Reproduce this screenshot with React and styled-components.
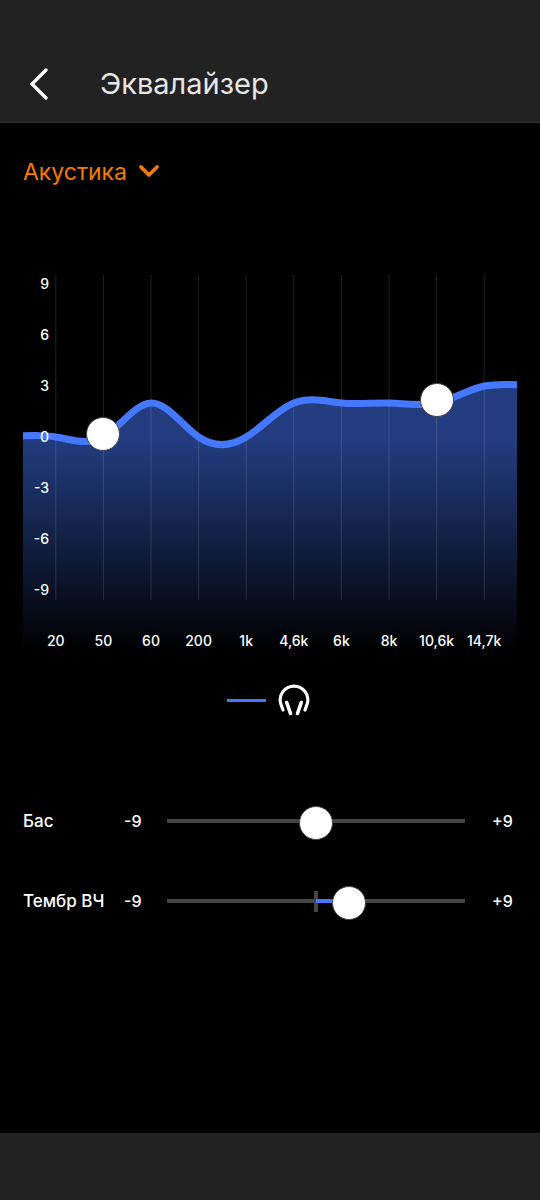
import React, { useState } from 'react';
import styled, { createGlobalStyle } from 'styled-components';

const GlobalStyle = createGlobalStyle`
  * {
    box-sizing: border-box;
  }
  body {
    margin: 0;
    background-color: #000;
    color: #fff;
    font-family: Inter, 'Open Sans', sans-serif;
  }
`;

const Page = styled.div`
  display: flex;
  flex-direction: column;
  min-height: 100vh;
`;

const Header = styled.header`
  display: flex;
  align-items: center;
  gap: 50px;
  padding: 46px 30px 0;
  height: 123px;
  background-color: #222;
  border-bottom: 1px solid #333;
`;

const BackButton = styled.button`
  display: flex;
  padding: 0;
  background-color: transparent;
  border: none;
  color: #fff;
  cursor: pointer;
`;

const Title = styled.h1`
  margin: 0;
  font-size: 29px;
  line-height: 36px;
  font-weight: 400;
  color: #e6e6e6;
`;

const Main = styled.main`
  flex: 1;
  padding: 33px 23px 0;
`;

const Preset = styled.div`
  display: flex;
  align-items: center;
  gap: 12px;
  height: 32px;
  color: #f57c00;
`;

const PresetSelect = styled.select`
  appearance: none;
  field-sizing: content;
  padding: 0;
  background-color: transparent;
  border: none;
  color: inherit;
  font-family: inherit;
  font-size: 23px;
  line-height: 32px;
  cursor: pointer;
`;

const ChartBox = styled.section`
  display: grid;
  height: 392px;
  margin-top: 70px;
  > * {
    grid-area: 1 / 1;
  }
`;

const Plot = styled.svg`
  width: 100%;
  height: 392px;
`;

const GainScale = styled.div`
  width: 26px;
  font-size: 14px;
  line-height: 51px;
  font-weight: 500;
  text-align: right;
`;

const BandGrid = styled.div`
  display: grid;
  grid-template-columns: repeat(10, minmax(0, 1fr));
  padding: 0 9px;
`;

const BandNames = styled(BandGrid)`
  align-self: end;
  justify-items: center;
  font-size: 14px;
  line-height: 18px;
  font-weight: 500;
  white-space: nowrap;
`;

const Handles = styled(BandGrid)`
  align-items: start;
  justify-items: center;
  padding-top: 7px;
`;

const BandSlider = styled.input`
  appearance: none;
  grid-row: 1;
  grid-column: ${(props) => props.$column};
  writing-mode: vertical-lr;
  direction: rtl;
  width: 34px;
  height: 338px;
  margin: 0;
  background: transparent;
  &::-webkit-slider-thumb {
    appearance: none;
    width: 34px;
    height: 34px;
    background-color: #fff;
    border: 1px solid #444;
    border-radius: 50%;
  }
`;

const Legend = styled.div`
  display: flex;
  align-items: center;
  justify-content: center;
  gap: 12px;
  margin: 34px 0 65px;
  padding-right: 4px;
`;

const LegendLine = styled.span`
  width: 39px;
  height: 3px;
  background-color: #4479ff;
`;

const ToneRow = styled.div`
  display: grid;
  grid-template-columns: 101px 43px 1fr 52px;
  align-items: center;
  height: 80px;
  font-size: 16px;
  line-height: 20px;
  font-weight: 500;
`;

const ToneLabel = styled.label`
  font-size: 17px;
`;

const MaxLabel = styled.span`
  padding-left: 27px;
`;

const ToneSlider = styled.input`
  appearance: none;
  width: calc(100% + 34px);
  height: 34px;
  margin: 0 -17px;
  background: linear-gradient(#444, #444) no-repeat center / 4px 21px;
  &::-webkit-slider-runnable-track {
    height: 34px;
    background:
      linear-gradient(
          to right,
          #444 ${(props) => props.$from}%,
          #4479ff ${(props) => props.$from}% ${(props) => props.$to}%,
          #444 ${(props) => props.$to}%
        )
        no-repeat center / calc(100% - 34px) 4px;
  }
  &::-webkit-slider-thumb {
    appearance: none;
    width: 34px;
    height: 34px;
    margin-top: 2px;
    background-color: #fff;
    border: 1px solid #444;
    border-radius: 50%;
  }
`;

const Footer = styled.footer`
  height: 67px;
  background-color: #222;
`;

const gains = ['9', '6', '3', '0', '-3', '-6', '-9'];

// slope is the rise of the curve at the band, in dB per column
const bands = [
  { name: '20', gain: 0, slope: -0.4 },
  { name: '50', gain: 0, slope: 1.6, handle: true },
  { name: '60', gain: 2, slope: 0.1 },
  { name: '200', gain: 0, slope: -1.9 },
  { name: '1k', gain: 0, slope: 1.7 },
  { name: '4,6k', gain: 2, slope: 1.1 },
  { name: '6k', gain: 2, slope: -0.3 },
  { name: '8k', gain: 2, slope: -0.1 },
  { name: '10,6k', gain: 2, slope: 0.6, handle: true },
  { name: '14,7k', gain: 3, slope: 0.6 },
];

const COLUMN = 47.6;
const DB = 17;
const bandX = (index) => 9 + COLUMN * (index + 0.5);
const gainY = (gain) => 179 - gain * DB;

function getCurve() {
  let d = `M-4 178C12 177 22 177 ${bandX(0)} ${gainY(0)}`;
  for (let i = 1; i < bands.length; i++) {
    const a = bands[i - 1];
    const b = bands[i];
    const x1 = bandX(i - 1) + COLUMN / 3;
    const x2 = bandX(i) - COLUMN / 3;
    d += `C${x1} ${gainY(a.gain + a.slope / 3)} ${x2} ${gainY(b.gain - b.slope / 3)} ${bandX(i)} ${gainY(b.gain)}`;
  }
  return `${d}C472 126 484 126 498 127`;
}

function Chart() {
  const [values, setValues] = useState(bands.map((band) => band.gain));
  const curve = getCurve();

  return (
    <ChartBox>
      <Plot viewBox="0 0 494 392" preserveAspectRatio="none" aria-hidden="true">
        <defs>
          <linearGradient id="fade" gradientUnits="userSpaceOnUse" x1="0" y1="182" x2="0" y2="392">
            <stop offset="0" stopColor="#4479ff" stopOpacity="0.5" />
            <stop offset="1" stopColor="#4479ff" stopOpacity="0" />
          </linearGradient>
        </defs>
        <path d={`${curve}V392H-4Z`} fill="url(#fade)" />
        {bands.map((band, index) => (
          <path key={band.name} d={`M${bandX(index)} 17V342`} stroke="#fff" strokeOpacity="0.13" />
        ))}
        <path d={curve} fill="none" stroke="#4479ff" strokeWidth="7" vectorEffect="non-scaling-stroke" />
      </Plot>
      <GainScale>
        {gains.map((gain) => (
          <div key={gain}>{gain}</div>
        ))}
      </GainScale>
      <BandNames>
        {bands.map((band) => (
          <span key={band.name}>{band.name}</span>
        ))}
      </BandNames>
      <Handles>
        {bands.map(
          (band, index) =>
            band.handle && (
              <BandSlider
                key={band.name}
                type="range"
                min="-9"
                max="9"
                aria-label={band.name}
                $column={index + 1}
                value={values[index]}
                onChange={(e) => setValues(values.map((v, i) => (i === index ? +e.target.value : v)))}
              />
            )
        )}
      </Handles>
    </ChartBox>
  );
}

function Tone({ id, label, initial }) {
  const [value, setValue] = useState(initial);
  const position = ((value + 9) / 18) * 100;

  return (
    <ToneRow>
      <ToneLabel htmlFor={id}>{label}</ToneLabel>
      <span>-9</span>
      <ToneSlider
        id={id}
        type="range"
        min="-9"
        max="9"
        value={value}
        $from={Math.min(50, position)}
        $to={Math.max(50, position)}
        onChange={(e) => setValue(+e.target.value)}
      />
      <MaxLabel>+9</MaxLabel>
    </ToneRow>
  );
}

function App() {
  return (
    <Page>
      <GlobalStyle />
      <Header>
        <BackButton aria-label="Назад">
          <svg width="20" height="32" viewBox="0 0 20 32" fill="none" stroke="currentColor" strokeWidth="3.3">
            <path d="M16 2L2 16l14 14" strokeLinecap="round" strokeLinejoin="miter" />
          </svg>
        </BackButton>
        <Title>Эквалайзер</Title>
      </Header>
      <Main>
        <Preset>
          <PresetSelect aria-label="Пресет" defaultValue="Акустика">
            <option>Акустика</option>
          </PresetSelect>
          <svg width="20" height="14" viewBox="0 0 20 14" fill="none" stroke="currentColor" strokeWidth="3.6">
            <path d="M2 2l8 8 8-8" strokeLinecap="round" strokeLinejoin="round" />
          </svg>
        </Preset>
        <Chart />
        <Legend>
          <LegendLine />
          <svg width="32" height="32" viewBox="0 0 32 32" fill="none" stroke="#fff" strokeLinecap="round">
            <path d="M5 26L3 20.5A13.8 13.8 0 1 1 29 20.5L27 26" strokeWidth="3.2" />
            <path d="M8.7 18.5L12.5 29.5M23.3 18.500L19.500 29.500" strokeWidth="3.6" />
          </svg>
        </Legend>
        <Tone id="bass" label="Бас" initial={0} />
        <Tone id="treble" label="Тембр ВЧ" initial={2} />
      </Main>
      <Footer />
    </Page>
  );
}

export default App;
